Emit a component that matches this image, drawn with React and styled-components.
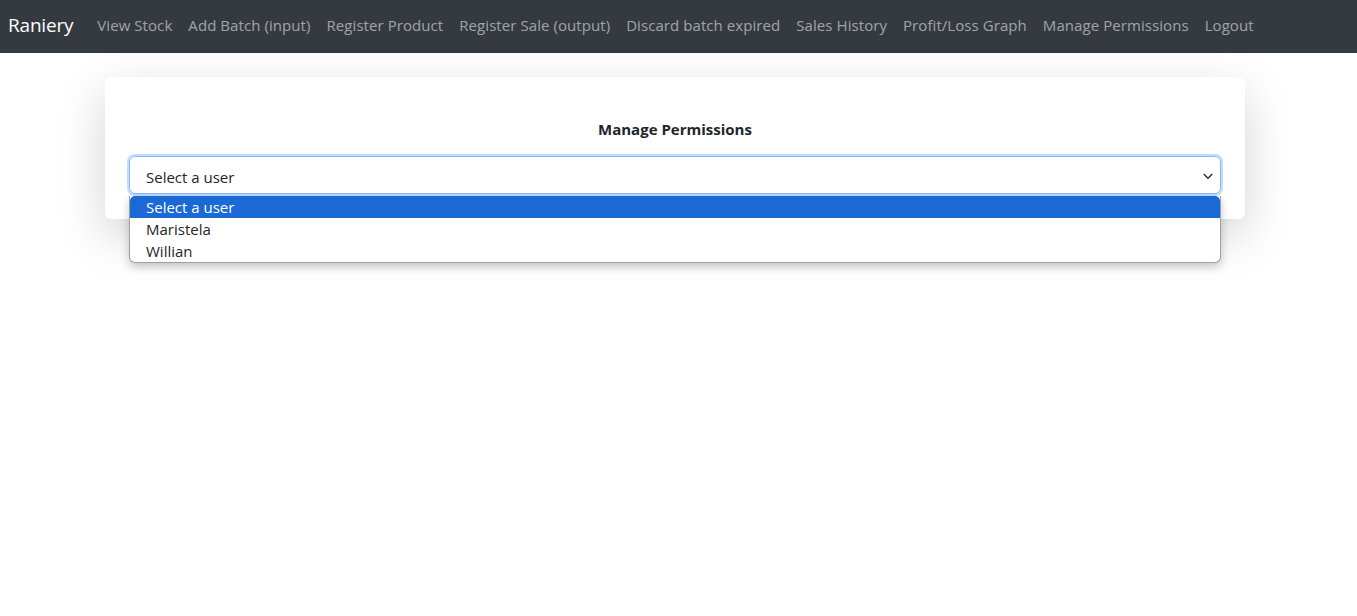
import React from "react";
import styled, { createGlobalStyle } from "styled-components";

const Global = createGlobalStyle`
  html, body { margin: 0; padding: 0; background: #fff; }
  body {
    min-height: 100vh;
    font-family: "Open Sans", "Noto Sans", "Liberation Sans", sans-serif;
    font-size: 16px;
    color: #212529;
  }
  #root { min-height: 100vh; }
  * { box-sizing: border-box; }
`;

const Navbar = styled.nav`
  height: 53px;
  background: #343a40;
  display: flex;
  align-items: center;
  padding: 0 8px 4px;
`;

const Brand = styled.span`
  font-size: 19px;
  color: #fff;
  margin-right: 16px;
  letter-spacing: -0.2px;
`;

const NavList = styled.div`
  display: flex;
  align-items: center;
`;

const NavLink = styled.span`
  color: rgba(255, 255, 255, 0.55);
  font-size: 15px;
  padding: 0 8px;
  letter-spacing: 0.07px;
  white-space: nowrap;
`;

const Main = styled.main`
  padding-top: 24px;
  padding-left: 105px;
`;

const Card = styled.section`
  width: 1140px;
  background: #fff;
  border-radius: 6px;
  box-shadow: 0 16px 48px rgba(0, 0, 0, 0.175);
  padding: 40px 23px 25px;
`;

const Title = styled.h5`
  margin: 0 0 15px;
  font-size: 15px;
  font-weight: 700;
  line-height: 24px;
  text-align: center;
  color: #212529;
`;

const SelectWrap = styled.div`
  position: relative;
  padding: 0 1px;
`;

const SelectBox = styled.div`
  height: 38px;
  border: 1px solid #86b7fe;
  border-radius: 6px;
  box-shadow: 0 0 0 2px #c2dbfe;
  display: flex;
  align-items: center;
  justify-content: space-between;
  padding: 3px 6px 0 16px;
  font-size: 15px;
  color: #212529;
`;

const Chevron = styled.svg`
  width: 12px;
  height: 12px;
  margin-top: -2px;
`;

const Dropdown = styled.ul`
  position: absolute;
  left: 1px;
  right: 1px;
  top: 40px;
  margin: 0;
  padding: 0;
  list-style: none;
  background: #fff;
  border: 1px solid #a0a0a0;
  border-top: none;
  border-radius: 0 0 6px 6px;
  box-shadow: 0 4px 10px rgba(0, 0, 0, 0.22);
  overflow: hidden;
`;

const Option = styled.li`
  height: 22px;
  line-height: 22px;
  padding-left: 16px;
  font-size: 15px;
  color: ${(p) => (p.$active ? "#fff" : "#212529")};
  background: ${(p) => (p.$active ? "#1a69d4" : "transparent")};
  border-radius: ${(p) => (p.$active ? "5px 5px 0 0" : "0")};
`;

const links = [
  "View Stock",
  "Add Batch (input)",
  "Register Product",
  "Register Sale (output)",
  "Discard batch expired",
  "Sales History",
  "Profit/Loss Graph",
  "Manage Permissions",
  "Logout",
];

export default function App() {
  return (
    <>
      <Global />
      <Navbar>
        <Brand>Raniery</Brand>
        <NavList>
          {links.map((l) => (
            <NavLink key={l}>{l}</NavLink>
          ))}
        </NavList>
      </Navbar>
      <Main>
        <Card>
          <Title>Manage Permissions</Title>
          <SelectWrap>
            <SelectBox>
              <span>Select a user</span>
              <Chevron viewBox="0 0 16 16">
                <path
                  d="M3 6l5 5 5-5"
                  fill="none"
                  stroke="#343a40"
                  strokeWidth="2.2"
                  strokeLinecap="round"
                  strokeLinejoin="round"
                />
              </Chevron>
            </SelectBox>
            <Dropdown>
              <Option $active>Select a user</Option>
              <Option>Maristela</Option>
              <Option>Willian</Option>
            </Dropdown>
          </SelectWrap>
        </Card>
      </Main>
    </>
  );
}
